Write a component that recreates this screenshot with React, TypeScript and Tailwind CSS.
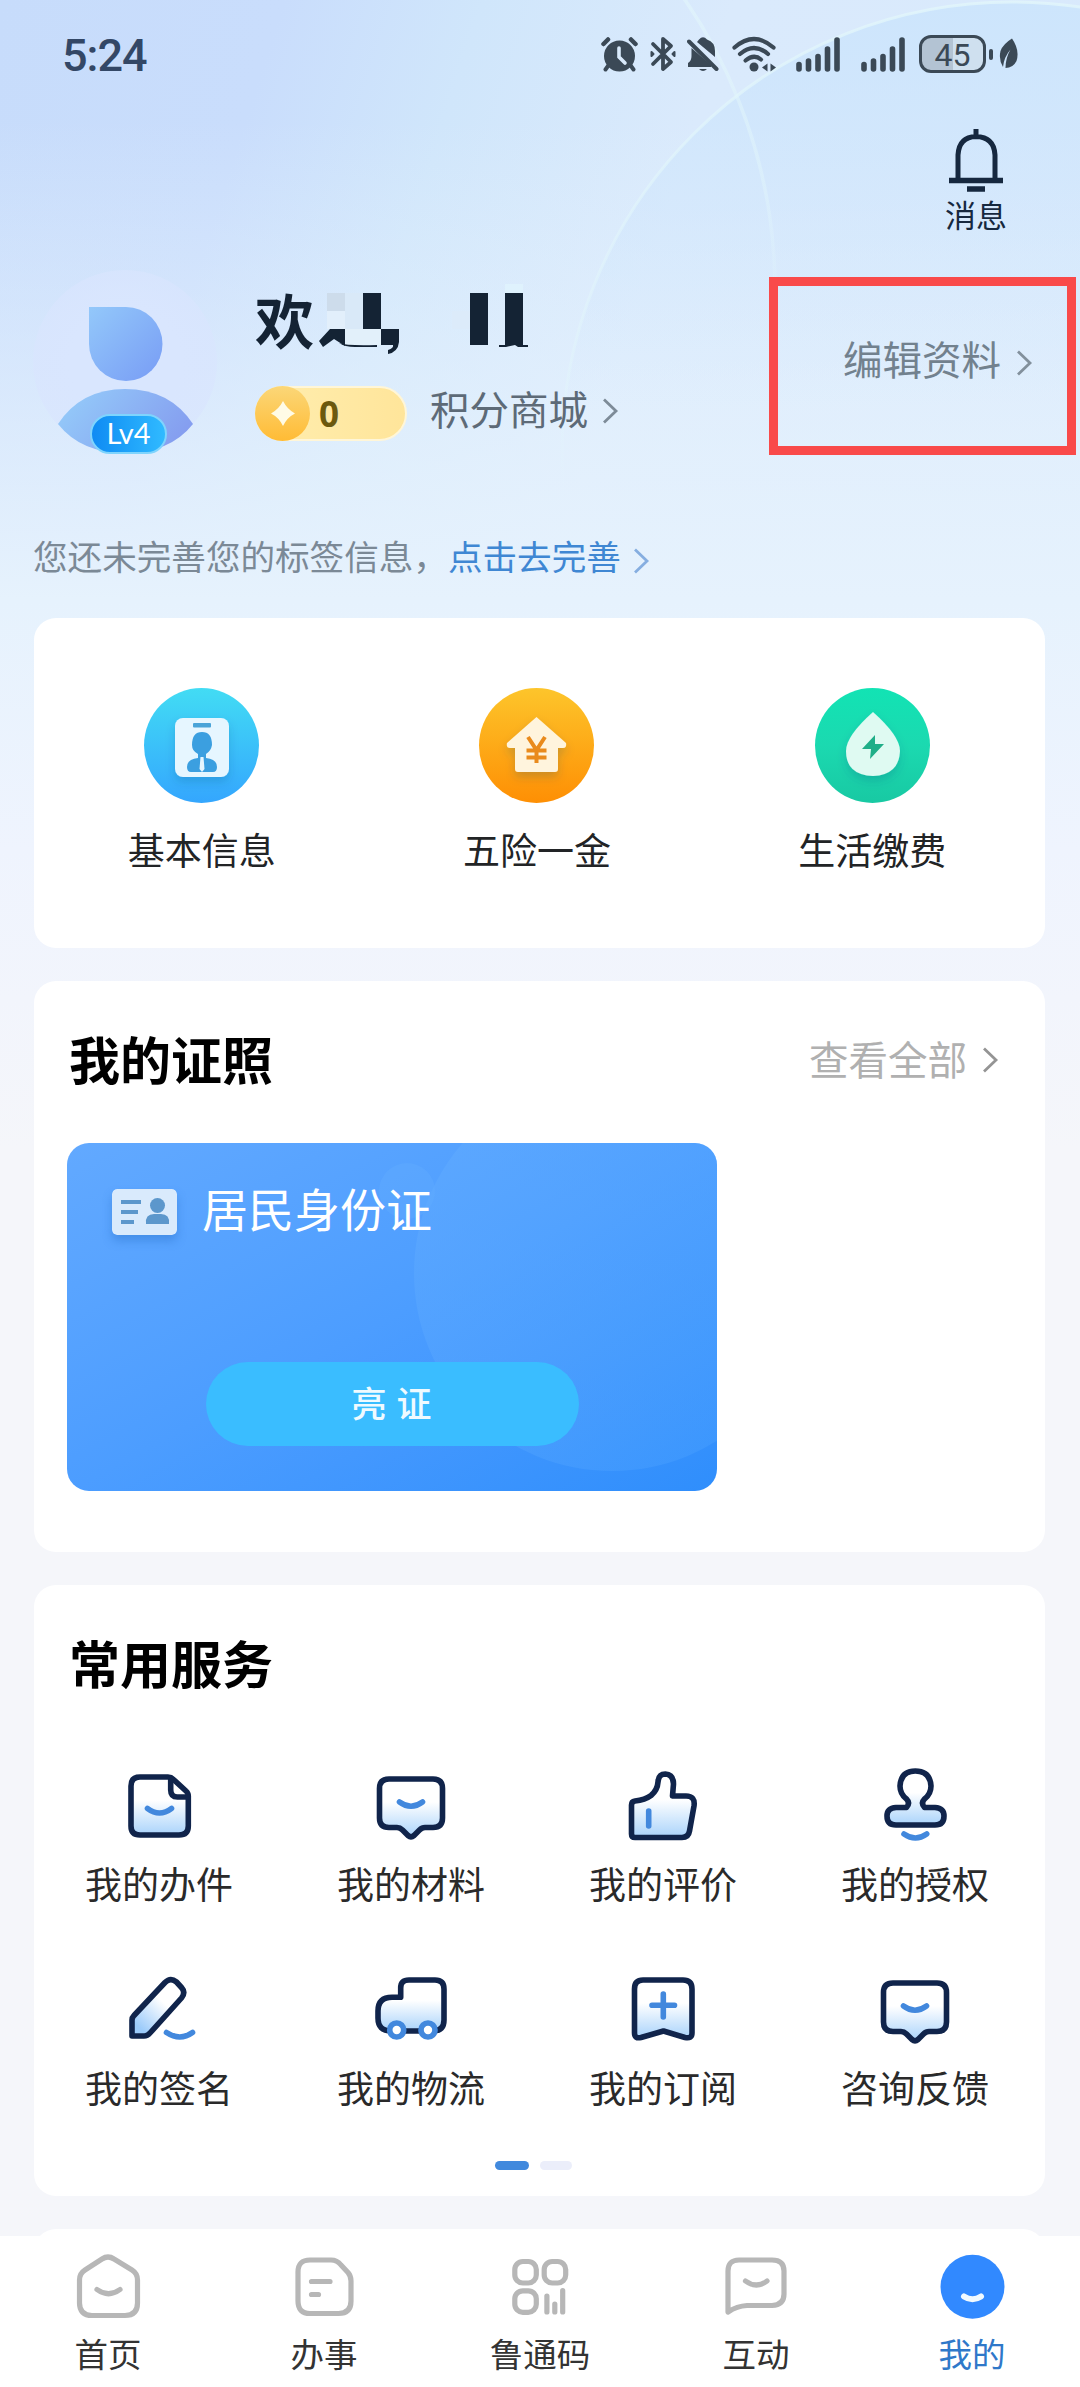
import React from "react";
import clsx from "clsx";

const NAVY = "#10244b";
const BLUE = "#4288dd";
const GRAY = "#b7b7b7";
const STATUS = "#3b4956";

interface ChevronProps {
  color: string;
  className?: string;
}

function Chevron({ color, className }: ChevronProps) {
  return (
    <svg width="18" height="28" viewBox="0 0 18 28" fill="none" className={clsx("shrink-0", className)}>
      <path d="M3 2.5 L15 14 L3 25.5" stroke={color} strokeWidth="2.8" />
    </svg>
  );
}

function SignalBars() {
  return (
    <svg width="44" height="35" viewBox="0 0 44 35" stroke={STATUS} strokeWidth="5.6" strokeLinecap="round">
      <path d="M3 27.5V32M12.5 24V32M22 19.5V32M31.5 12V32" />
      <path d="M41 3V32" />
    </svg>
  );
}

function StatusBar() {
  return (
    <div className="flex h-[108px] shrink-0 items-center justify-between pl-[62px] pr-[61px]">
      <span className="mt-[3px] font-[Roboto,sans-serif] text-[45px] font-medium leading-none tracking-[-1px] text-[#334766]">5:24</span>
      <div className="flex items-center">
        {/* Alarm */}
        <svg width="37" height="36" viewBox="0 0 37 36" fill="none" strokeLinecap="round">
          <circle cx="18.5" cy="20" r="15.5" fill={STATUS} />
          <path d="M2.500 8 L7 3.500 M34.500 8 L30 3.500" stroke={STATUS} strokeWidth="4.500" />
          <path d="M7 30 L4.500 33.500 M30 30 L32.500 33.500" stroke={STATUS} strokeWidth="4" />
          <path d="M18 12 V21 L24 27" stroke="#d9eafb" strokeWidth="3.600" />
        </svg>
        {/* Bluetooth */}
        <svg width="26" height="36" viewBox="0 0 26 36" fill="none" stroke={STATUS} strokeWidth="3.800" strokeLinejoin="round" strokeLinecap="round" className="ml-3">
          <path d="M3 8 L21 26 L13 33 V3 L21 10 L3 28" />
          <path d="M1.500 16 L3.500 18 L1.500 20Z M24.500 16 L22.500 18 L24.500 20Z" strokeWidth="2" />
        </svg>
        {/* Muted bell */}
        <svg width="32" height="36" viewBox="0 0 32 36" className="ml-[11px]">
          <path d="M12 3.500 Q16 -1 20 3.500 Q28 6 28 15 V21 L10 6Z" fill={STATUS} />
          <path d="M4.500 12 L24 29 V31 H1 V27 Q4.500 25 4.500 20Z" fill={STATUS} />
          <path d="M2 5.500 L29.500 33" stroke={STATUS} strokeWidth="4" strokeLinecap="round" />
          <path d="M12 33 H20 Q16 37 12 33Z" fill={STATUS} />
        </svg>
        {/* Wifi */}
        <svg width="44" height="36" viewBox="0 0 44 36" fill="none" stroke={STATUS} strokeLinecap="round" className="ml-[13px]">
          <path d="M2.500 11.500 Q22 -5.500 41.500 11.500" strokeWidth="4.200" />
          <path d="M8 18 Q22 6 36 18" strokeWidth="4.200" />
          <path d="M13.500 24.500 Q22 17.500 29 23.500" strokeWidth="4.200" />
          <circle cx="22" cy="31" r="4.500" fill={STATUS} stroke="none" />
          <path d="M35.500 27.500V35.500L30 31.500ZM38.500 35.500V27.500L44 31.500Z" fill={STATUS} stroke="none" />
        </svg>
        <div className="ml-5">
          <SignalBars />
        </div>
        <div className="ml-[21px]">
          <SignalBars />
        </div>
        {/* Battery */}
        <div className="relative ml-[14px] flex h-[38px] w-[67px] items-center justify-center overflow-hidden rounded-[12px] border-[3px] border-[#3b4956] bg-[linear-gradient(to_right,#b3c3d3_50%,#cfe0ef_50%)] pt-px font-[Roboto,sans-serif] text-[32px] leading-none text-[#3b4956]">
          45
        </div>
        <div className="ml-[3px] h-[11px] w-1 rounded-full bg-[#3b4956]" />
        <svg width="20" height="32" viewBox="0 0 20 32" className="ml-[6px]">
          <path d="M13 0.500 Q4 6 1.500 13 Q-0.500 22 4 29 Q5 19 11.500 11.500 Q6.500 20 6.500 30 Q14 30 17.500 23 Q21 12 13 0.500Z" fill={STATUS} />
        </svg>
      </div>
    </div>
  );
}

function Backdrop() {
  return (
    <svg width="1080" height="620" viewBox="0 0 1080 620" fill="none" className="absolute left-0 top-0">
      <defs>
        <linearGradient id="ring" x1="0" y1="0" x2="0" y2="1">
          <stop offset="0" stopColor="#e2f6fb" stopOpacity="0.800" />
          <stop offset="0.400" stopColor="#e2f6fb" stopOpacity="0.450" />
          <stop offset="0.550" stopColor="#e2f6fb" stopOpacity="0" />
        </linearGradient>
        <linearGradient id="lens" x1="0" y1="0" x2="0" y2="1">
          <stop offset="0" stopColor="#cae4fc" stopOpacity="0.800" />
          <stop offset="0.450" stopColor="#cce4fc" stopOpacity="0" />
        </linearGradient>
      </defs>
      <circle cx="1012" cy="452" r="450" fill="url(#lens)" />
      <circle cx="1012" cy="452" r="450" stroke="url(#ring)" strokeWidth="3" />
      <circle cx="263" cy="290" r="512" stroke="url(#ring)" strokeWidth="3.500" />
    </svg>
  );
}

function Avatar() {
  return (
    <div className="relative h-[184px] w-[184px] shrink-0">
      <svg width="184" height="184" viewBox="0 0 184 184">
        <defs>
          <linearGradient id="head" x1="0" y1="0" x2="1" y2="1">
            <stop offset="0" stopColor="#93c8fa" />
            <stop offset="1" stopColor="#789cf5" />
          </linearGradient>
          <linearGradient id="body" x1="0" y1="0.300" x2="1" y2="0.700">
            <stop offset="0" stopColor="#94caf9" />
            <stop offset="1" stopColor="#849bef" />
          </linearGradient>
          <radialGradient id="face">
            <stop offset="0.600" stopColor="#d9e6fe" />
            <stop offset="1" stopColor="#d9e5fe" stopOpacity="0.700" />
          </radialGradient>
        </defs>
        <circle cx="92" cy="92" r="92" fill="url(#face)" />
        <path d="M56 37H93A36.500 37 0 0 1 93 111A37 37 0 0 1 56 74Z" fill="url(#head)" />
        <path d="M25 154 Q48 119 92 119 Q137 119 160 154 Q137 183 92 183 Q48 183 25 154Z" fill="url(#body)" />
      </svg>
      <span className="absolute bottom-0 left-[57px] flex h-[40px] w-[77px] items-center justify-center rounded-full border-2 border-[#7fd4fd] bg-gradient-to-r from-[#0f8bf3] to-[#30baff] pb-1 font-[Lato,sans-serif] text-[29px] leading-none text-white">
        Lv4
      </span>
    </div>
  );
}

function Greeting() {
  return (
    <div className="flex h-[96px] items-start">
      <span className="-mt-[17px] text-[59px] font-bold leading-[92px] text-[#142334]">欢</span>
      {/* Hidden user name */}
      <svg width="210" height="72" viewBox="320 284 210 72" fill="#142334" className="-mt-[6px] ml-[5px]">
        <rect x="328" y="293" width="18" height="18" fill="#cddceb" />
        <rect x="328" y="311" width="18" height="18" fill="#e2effb" />
        <rect x="346" y="293" width="18" height="36" fill="#d9e9f8" />
        <rect x="346" y="329" width="36" height="16" fill="#e2f0fa" />
        <rect x="364" y="293" width="18" height="36" />
        <path d="M331 329H346V346L335 339L324 347L320 341Z" />
        <path d="M340 343Q348 346 378 345V347H356Q346 347 340 343Z" />
        <path d="M382 329H400V342Q399 352 389 354V350Q395 348 394 345H382Z" />
        <rect x="506" y="276" width="18" height="17" fill="#dff2fd" />
        <rect x="453" y="311" width="18" height="18" fill="#dcebfa" />
        <rect x="471" y="293" width="18" height="52" />
        <rect x="506" y="293" width="18" height="52" />
        <path d="M500 345H529V347H519L516 345L507 347H500Z" />
      </svg>
    </div>
  );
}

function Profile() {
  return (
    <div className="flex h-[185px] shrink-0 pl-[33px] pr-1">
      <Avatar />
      <div className="ml-[38px] pt-[20px]">
        <Greeting />
        <div className="flex h-[55px] items-center">
          <div className="flex h-[55px] w-[152px] items-center rounded-full border-2 border-[#fff6d8] bg-gradient-to-r from-[#ffeeb0] to-[#ffe59a]">
            <svg width="55" height="55" viewBox="0 0 55 55" className="-ml-0.5 shrink-0">
              <defs>
                <linearGradient id="coin" x1="0" y1="0" x2="0" y2="1">
                  <stop offset="0" stopColor="#fbd778" />
                  <stop offset="1" stopColor="#ffbb35" />
                </linearGradient>
              </defs>
              <circle cx="27.500" cy="27.500" r="27.500" fill="url(#coin)" />
              <path d="M28 15Q32 23 40 27.500Q32 31.500 28 40Q24 31.500 16 27.500Q24 23 28 15Z" fill="#fffbe6" />
            </svg>
            <span className="ml-[9px] font-['Open_Sans',sans-serif] text-[35px] font-bold leading-none text-[#6c590e]">0</span>
          </div>
          <span className="-mt-3 ml-[23px] text-[39.500px] leading-[52px] text-[#5d6a77]">积分商城</span>
          <Chevron color="#7d8b98" className="-mt-1.5 ml-[13px]" />
        </div>
      </div>
      <div className="ml-auto mt-[7px] flex h-[178px] w-[307px] items-center justify-end border-[9px] border-[#f94a4a] pr-[34px]">
        <span className="-mt-[17px] text-[39.500px] leading-[52px] text-[#72818e]">编辑资料</span>
        <Chevron color="#82909c" className="-mt-1.5 ml-[14px]" />
      </div>
    </div>
  );
}

interface QuickEntryProps {
  label: string;
  children: React.ReactNode;
}

function QuickEntry({ label, children }: QuickEntryProps) {
  return (
    <div className="flex w-[336px] flex-col items-center">
      <svg width="115" height="115" viewBox="0 0 115 115">
        {children}
      </svg>
      <span className="mt-[18px] text-[37px] leading-[56px] text-[#222426]">{label}</span>
    </div>
  );
}

function QuickCard() {
  return (
    <section className="flex h-[330px] shrink-0 justify-center rounded-[22px] bg-white pr-[5px] pt-[70px]">
      <svg width="0" height="0" className="absolute">
        <defs>
          <linearGradient id="qBlue" x1="0" y1="0" x2="0" y2="1">
            <stop offset="0" stopColor="#42dcf4" />
            <stop offset="1" stopColor="#34a6fe" />
          </linearGradient>
          <linearGradient id="qOrange" x1="0" y1="0" x2="0" y2="1">
            <stop offset="0" stopColor="#fdc52b" />
            <stop offset="1" stopColor="#fe8f04" />
          </linearGradient>
          <linearGradient id="qGreen" x1="0" y1="0" x2="0" y2="1">
            <stop offset="0" stopColor="#12e3b4" />
            <stop offset="0.500" stopColor="#1bd9b0" />
            <stop offset="1" stopColor="#18c9a3" />
          </linearGradient>
          <filter id="drop" x="-30%" y="-30%" width="160%" height="170%">
            <feDropShadow dx="0" dy="5" stdDeviation="5" floodColor="#00457a" floodOpacity="0.200" />
          </filter>
        </defs>
      </svg>
      <QuickEntry label="基本信息">
        <circle cx="57.500" cy="57.500" r="57.500" fill="url(#qBlue)" />
        <rect x="31" y="30" width="54" height="59" rx="8" fill="#e6f6ff" filter="url(#drop)" />
        <rect x="49" y="35" width="18" height="4.500" rx="1" fill="#4aa4d8" />
        <path d="M58 44Q68 44 68 57Q67 63 62 66V70Q73 71 73 79Q73 84 69 84H47Q43 84 43 79Q43 71 54 70V66Q48 63 48 57Q48 44 58 44Z" fill="#3b9fe0" />
        <path d="M56.500 69H59.500L60.500 81L58 84L55.500 81Z" fill="#e6f6ff" />
      </QuickEntry>
      <QuickEntry label="五险一金">
        <circle cx="57.500" cy="57.500" r="57.500" fill="url(#qOrange)" />
        <path d="M57.500 29L87 55Q88 60 84 60H79V81Q79 84 76 84H39Q36 84 36 81V60H31Q27 60 28 55Z" fill="#fff4dd" filter="url(#drop)" />
        <path d="M49 49L57.500 62L66 49M57.500 62V75M47.500 62.500H67.500M47.500 69.500H67.500" stroke="#e98a1c" strokeWidth="4" fill="none" />
      </QuickEntry>
      <QuickEntry label="生活缴费">
        <circle cx="57.500" cy="57.500" r="57.500" fill="url(#qGreen)" />
        <path d="M58 24Q85 48 85 63Q84 87 58 88Q31 87 31 63Q31 48 58 24Z" fill="#dffaf2" filter="url(#drop)" />
        <path d="M60 47L47 61H56L55 71L69 56H60Z" fill="#1fae88" />
      </QuickEntry>
    </section>
  );
}

function LicenseCard() {
  return (
    <section className="flex h-[571px] shrink-0 flex-col rounded-[22px] bg-white pl-[33px] pr-[46px]">
      <div className="flex h-[162px] items-center justify-between">
        <h2 className="-mt-[8px] ml-[2px] text-[51px] font-bold leading-[60px] text-black">我的证照</h2>
        <div className="-mt-1 flex items-center">
          <span className="-mt-1 text-[39.500px] leading-[52px] text-[#b0b0b0]">查看全部</span>
          <Chevron color="#949494" className="ml-[14px]" />
        </div>
      </div>
      <div className="relative flex h-[348px] w-[650px] flex-col items-center overflow-hidden rounded-[22px] bg-gradient-to-br from-[#62a9ff] via-[#4c9dff] to-[#2f8efc]">
        <svg width="650" height="348" viewBox="0 0 650 348" className="absolute left-0 top-0">
          <defs>
            <linearGradient id="bubble" x1="0" y1="0" x2="1" y2="0.800">
              <stop offset="0" stopColor="#68b0ff" stopOpacity="0.400" />
              <stop offset="1" stopColor="#4ba2ff" stopOpacity="0.350" />
            </linearGradient>
          </defs>
          <circle cx="545" cy="130" r="198" fill="url(#bubble)" />
          <circle cx="340" cy="48" r="28" fill="#62adff" fillOpacity="0.400" />
        </svg>
        <div className="relative flex h-[138px] w-full items-center pl-[45px]">
          <svg width="65" height="46" viewBox="0 0 65 46" className="rounded-[5px] shadow-[0_6px_10px_rgba(30,100,190,0.35)]">
            <rect width="65" height="46" rx="5" fill="#d9eafc" />
            <path d="M9 13H29M9 23H26M9 33H22" stroke="#5c97cc" strokeWidth="4" />
            <ellipse cx="45.500" cy="16.500" rx="7.500" ry="7.500" fill="#5c97cc" />
            <path d="M34 35Q33 25 42 25H49Q58 25 57 35Z" fill="#5c97cc" />
          </svg>
          <span className="-mt-[11px] ml-[25px] text-[46px] leading-[60px] text-white">居民身份证</span>
        </div>
        <button className="relative mt-[81px] h-[84px] w-[373px] rounded-full bg-[#3abdff] pb-1 text-[35px] font-medium leading-[60px] tracking-[1px] text-[#effaff]">
          亮 证
        </button>
      </div>
    </section>
  );
}

const SMILE = "M28.500 36Q40 44.500 51.500 36";

function MessageShape() {
  return (
    <>
      <path d="M18 13H62Q71.500 13 71.500 22.500V52Q71.500 61.500 62 61.500H54Q51 61.500 48.500 64L43 69.500Q40 72 37 69.500L31.500 64Q29 61.500 26 61.500H18Q8.500 61.500 8.500 52V22.500Q8.500 13 18 13Z" />
      <path d={SMILE} stroke={BLUE} fill="none" />
    </>
  );
}

const services = [
  {
    label: "我的办件",
    icon: (
      <>
        <path d="M21 11H49Q52 11 54.500 13.500L67 25Q69.300 27 69.300 30V60Q69.300 69 60 69H21Q12 69 12 60V20Q12 11 21 11Z" />
        <path d="M51.700 12V24Q51.700 31 58.500 31H69" fill="none" />
        <path d="M28.500 42.500Q40.500 51.500 52.500 42.500" stroke={BLUE} fill="none" />
      </>
    ),
  },
  { label: "我的材料", icon: <MessageShape /> },
  {
    label: "我的评价",
    icon: (
      <>
        <path d="M8.500 39Q8.500 35.500 12 35Q22 34 28 29.500Q34.500 24 35 16Q35.500 8 42.300 8Q50.500 8.500 50.500 18L49.500 30H63Q72.500 30 71 40L66.500 65Q65.500 71.500 59 71.500H12Q8.500 71.500 8.500 68Z" />
        <path d="M25.700 45V60" stroke={BLUE} />
      </>
    ),
  },
  {
    label: "我的授权",
    icon: (
      <>
        <path d="M31.500 41.500Q35.500 37 31.500 33Q25 28 25 20Q26 5 40.300 5Q55 5 56 20Q56 28 49.500 33Q45.500 37 49.500 41.500H60Q69 42 69 50Q69 59 60 59H21Q12 59 12 50Q12 42 21 41.500Z" />
        <path d="M29 68Q40.500 76 51.700 68" stroke={BLUE} fill="none" />
      </>
    ),
  },
  {
    label: "我的签名",
    icon: (
      <>
        <path d="M13 66V50Q13 47.500 15 45.500L46 12.500Q51.500 7 57.500 12L62.500 17.500Q67 22.500 62.500 28L31 63Q28.500 66 25 66Z" fill="url(#pen)" />
        <path d="M47.500 62.500Q61 71.500 73.500 62.500" stroke={BLUE} fill="none" />
      </>
    ),
  },
  {
    label: "我的物流",
    icon: (
      <>
        <path d="M29.700 27.300V18Q29.700 10 38 10H64Q73 10 73 19V50Q73 61 62 61H20Q7 61 7 48V41Q7 27.300 21 27.300Z" />
        <circle cx="25.700" cy="60" r="7" stroke={BLUE} fill="#fff" />
        <circle cx="57" cy="60" r="7" stroke={BLUE} fill="#fff" />
      </>
    ),
  },
  {
    label: "我的订阅",
    icon: (
      <>
        <path d="M20 10H60Q69 10 69 19V63Q69 69 62 67.500L40.500 61L18 67.500Q11.500 69 11.500 63V19Q11.500 10 20 10Z" />
        <path d="M29 35.300H51.500M40.300 24V47" stroke={BLUE} />
      </>
    ),
  },
  { label: "咨询反馈", icon: <MessageShape /> },
];

function ServicesCard() {
  return (
    <section className="flex h-[611px] shrink-0 flex-col items-center rounded-[22px] bg-white pr-[5px]">
      <svg width="0" height="0" className="absolute">
        <defs>
          <linearGradient id="sheet" x1="0" y1="0" x2="0" y2="1">
            <stop offset="0.400" stopColor="#ffffff" />
            <stop offset="1" stopColor="#a9d3fb" />
          </linearGradient>
          <linearGradient id="pen" x1="0.800" y1="0.200" x2="0.200" y2="0.900">
            <stop offset="0.300" stopColor="#ffffff" />
            <stop offset="1" stopColor="#9ccbfa" />
          </linearGradient>
        </defs>
      </svg>
      <h2 className="self-start pl-[35px] pt-[47px] text-[51px] font-bold leading-[60px] text-black">常用服务</h2>
      <div className="mt-[74px] grid grid-cols-[repeat(4,252px)]">
        {services.map((item) => (
          <div key={item.label} className="flex h-[204px] flex-col items-center">
            <svg width="80" height="80" viewBox="0 0 80 80" fill="url(#sheet)" stroke={NAVY} strokeWidth="5.600" strokeLinecap="round" strokeLinejoin="round">
              {item.icon}
            </svg>
            <span className="mt-[7px] text-[37px] leading-[60px] text-[#2a2a2a]">{item.label}</span>
          </div>
        ))}
      </div>
      <div className="-mt-[13px] mr-[8px] flex gap-[11px]">
        <span className="h-[9px] w-[34px] rounded-full bg-[#4189dd]" />
        <span className="h-[9px] w-[32px] rounded-full bg-[#ebeefa]" />
      </div>
    </section>
  );
}

const tabs = [
  {
    label: "首页",
    icon: (
      <>
        <path d="M30 8Q36 4 42 8L60 19Q65.500 22.500 65.500 29V52Q65.500 64.500 53 64.500H20Q7.500 64.500 7.500 52V29Q7.500 22.500 13 19Z" />
        <path d="M25 38.500Q36.500 47 48 38.500" />
      </>
    ),
  },
  {
    label: "办事",
    icon: (
      <>
        <path d="M22 9H43Q49 9 53 14L60 21.500Q63 25 63 30V50Q63 62.500 50.500 62.500H22Q10 62.500 10 50V21Q10 9 22 9Z" />
        <path d="M23.500 30.500H42M23.500 43.500H30.500" />
      </>
    ),
  },
  {
    label: "鲁通码",
    icon: (
      <>
        <rect x="10.800" y="10.500" width="21.500" height="21.500" rx="8" />
        <rect x="40.200" y="10.500" width="21.500" height="21.500" rx="8" />
        <rect x="10.800" y="39.800" width="21.500" height="21.500" rx="8" />
        <path d="M42.900 45V61M50.800 53V61M58.700 39.500V61" />
      </>
    ),
  },
  {
    label: "互动",
    icon: (
      <>
        <path d="M8 61V20Q8 9 19 9H52Q64 9 64 20V43Q64 54 52 54.500H27Q17 55 8 61Z" />
        <path d="M25.500 30Q36.500 38 47 30" />
      </>
    ),
  },
  {
    label: "我的",
    active: true,
    icon: (
      <>
        <circle cx="36.500" cy="35.800" r="32" fill="#3189ff" stroke="none" />
        <path d="M28 45.500Q36.500 51 45 45.500" stroke="#f1faff" strokeWidth="6" />
      </>
    ),
  },
];

function TabBar() {
  return (
    <nav className="flex h-[151px] shrink-0 bg-white pt-[15px]">
      {tabs.map((tab) => (
        <div key={tab.label} className="flex w-[216px] flex-col items-center">
          <svg width="72" height="72" viewBox="0 0 72 72" fill="none" stroke={GRAY} strokeWidth="5.200" strokeLinecap="round" strokeLinejoin="round">
            {tab.icon}
          </svg>
          <span className={clsx("mt-[5px] text-[33.500px] leading-[50px]", tab.active ? "text-[#2f78c9]" : "text-[#333333]")}>
            {tab.label}
          </span>
        </div>
      ))}
    </nav>
  );
}

export default function App() {
  return (
    <div className="relative flex h-[2387px] w-[1080px] flex-col overflow-hidden bg-[linear-gradient(to_bottom,transparent_0,transparent_120px,#e6f2fd_600px,#eff4fe_850px,#f5f6fa_1150px),linear-gradient(108deg,#c7dcfb_0,#c9ddfc_270px,#d0e6fb_460px,#daeafc_700px,#d6e8fc_100%)] font-['Noto_Sans_CJK_SC',sans-serif]">
      <Backdrop />
      <div className="relative flex flex-1 flex-col">
        <StatusBar />
        {/* Messages */}
        <div className="flex h-[162px] shrink-0 justify-end pr-[73px] pt-[21px]">
          <div className="flex flex-col items-center">
            <svg width="54" height="64" viewBox="0 0 54 64" fill="none" stroke="#16283f" strokeWidth="5">
              <path d="M27 0V8M9 51V26Q10 8 27 7.500Q45 8 46 26V51" />
              <path d="M0 51.500H54M18 60H36" strokeWidth="5.500" />
            </svg>
            <span className="text-[31px] leading-[42px] text-[#16283f]">消息</span>
          </div>
        </div>
        <Profile />
        {/* Tag hint */}
        <div className="flex h-[163px] shrink-0 items-center pl-[33px] pt-[44px] text-[34.600px] leading-[50px]">
          <span className="-mt-[7px] text-[#7b8996]">您还未完善您的标签信息，</span>
          <span className="-mt-[7px] text-[#3f87d3]">点击去完善</span>
          <Chevron color="#86aee0" className="ml-[11px] mt-1" />
        </div>
        <main className="flex flex-col gap-[33px] pl-[34px] pr-[35px]">
          <QuickCard />
          <LicenseCard />
          <ServicesCard />
          <section className="h-[60px] shrink-0 rounded-[22px] bg-white" />
        </main>
      </div>
      <div className="absolute bottom-0 left-0 w-full">
        <TabBar />
      </div>
    </div>
  );
}
